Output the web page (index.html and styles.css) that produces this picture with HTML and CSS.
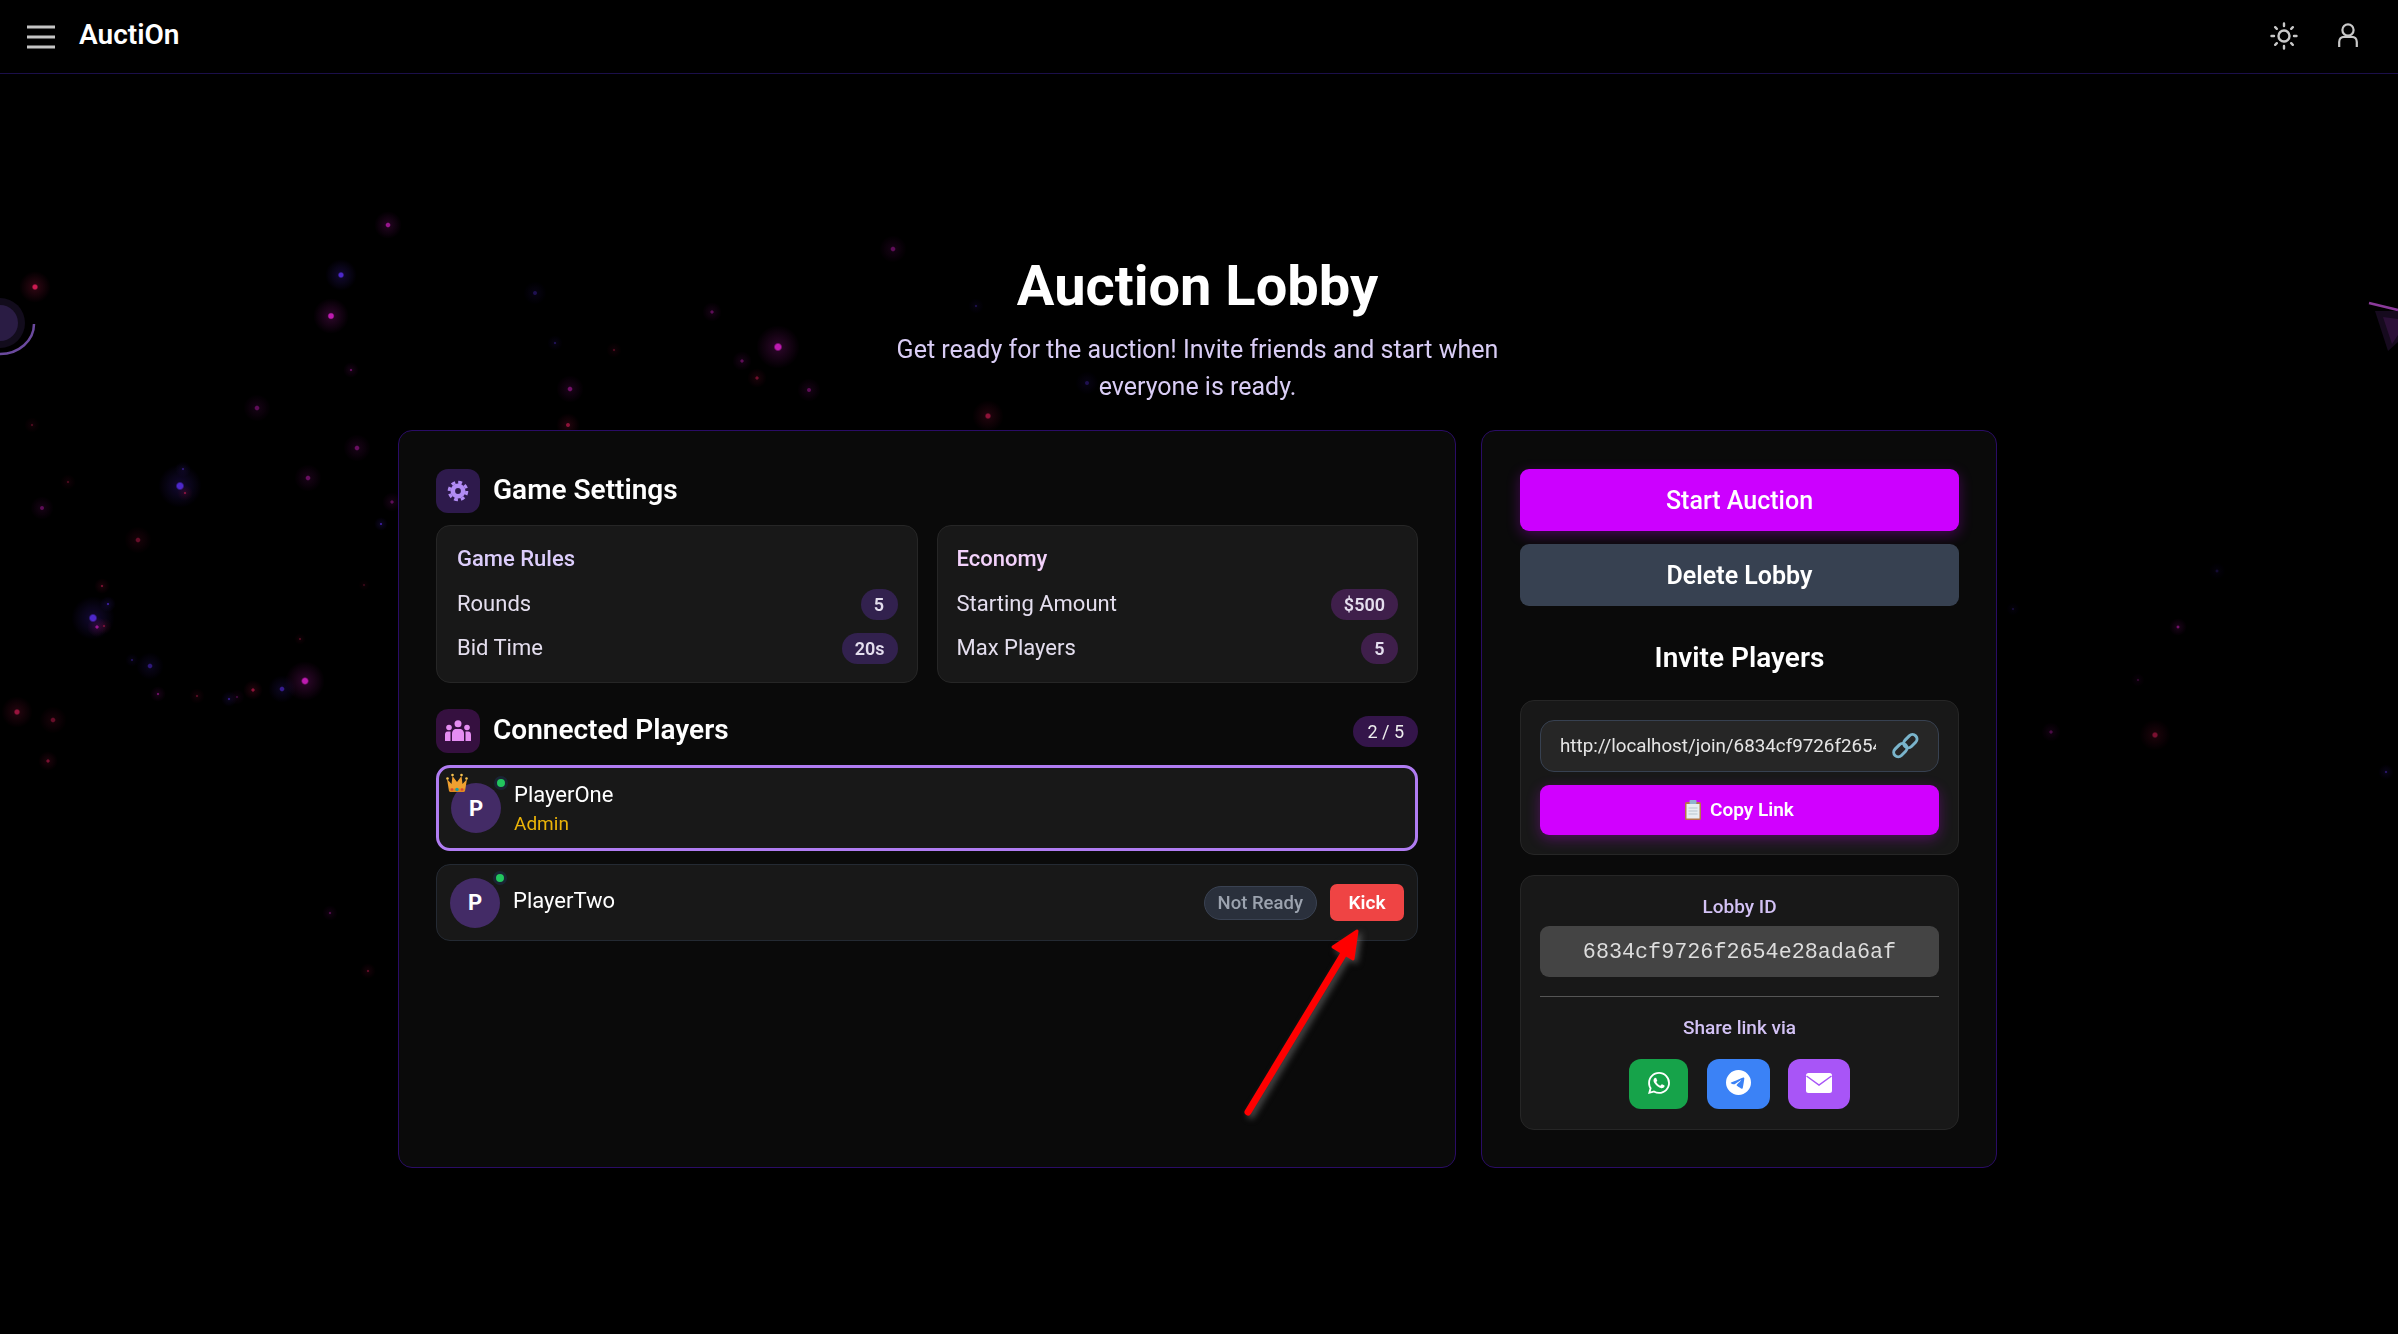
FILE: index.html
```html
<!DOCTYPE html>
<html lang="en">
<head>
    <meta charset="UTF-8">
    <meta name="viewport" content="width=device-width, initial-scale=1.0">
    <title>Auction Lobby - AuctiOn</title>
    <link rel="stylesheet" href="styles.css">
</head>
<body>
    <!-- background particles and floating shapes -->
    <svg class="particles" width="2398" height="1334" viewBox="0 0 2398 1334">
        <defs>
            <radialGradient id="pm"><stop offset="0" stop-color="#e020d0"/><stop offset=".12" stop-color="#e020d0"/><stop offset=".2" stop-color="#e020d0" stop-opacity=".2"/><stop offset="1" stop-color="#e020d0" stop-opacity="0"/></radialGradient>
            <radialGradient id="pb"><stop offset="0" stop-color="#5b30f0"/><stop offset=".12" stop-color="#5b30f0"/><stop offset=".2" stop-color="#5b30f0" stop-opacity=".2"/><stop offset="1" stop-color="#5b30f0" stop-opacity="0"/></radialGradient>
            <radialGradient id="pr"><stop offset="0" stop-color="#f02060"/><stop offset=".12" stop-color="#f02060"/><stop offset=".2" stop-color="#f02060" stop-opacity=".2"/><stop offset="1" stop-color="#f02060" stop-opacity="0"/></radialGradient>
        </defs>
        <g opacity=".85">
            <circle cx="35" cy="287" r="16" fill="url(#pr)"/>
            <circle cx="388" cy="225" r="14" fill="url(#pm)" opacity=".8"/>
            <circle cx="341" cy="275" r="16" fill="url(#pb)"/>
            <circle cx="331" cy="316" r="18" fill="url(#pm)"/>
            <circle cx="351" cy="370" r="8" fill="url(#pm)" opacity=".5"/>
            <circle cx="257" cy="408" r="14" fill="url(#pm)" opacity=".5"/>
            <circle cx="357" cy="448" r="14" fill="url(#pm)" opacity=".55"/>
            <circle cx="308" cy="478" r="14" fill="url(#pm)" opacity=".55"/>
            <circle cx="180" cy="486" r="22" fill="url(#pb)"/>
            <circle cx="183" cy="469" r="8" fill="url(#pb)" opacity=".5"/>
            <circle cx="185" cy="493" r="8" fill="url(#pr)" opacity=".6"/>
            <circle cx="32" cy="425" r="8" fill="url(#pr)" opacity=".35"/>
            <circle cx="68" cy="482" r="8" fill="url(#pr)" opacity=".35"/>
            <circle cx="42" cy="508" r="12" fill="url(#pm)" opacity=".5"/>
            <circle cx="392" cy="502" r="10" fill="url(#pm)" opacity=".5"/>
            <circle cx="381" cy="524" r="7" fill="url(#pb)" opacity=".7"/>
            <circle cx="138" cy="540" r="14" fill="url(#pr)" opacity=".5"/>
            <circle cx="102" cy="586" r="8" fill="url(#pr)" opacity=".55"/>
            <circle cx="108" cy="604" r="8" fill="url(#pb)" opacity=".7"/>
            <circle cx="93" cy="618" r="22" fill="url(#pb)"/>
            <circle cx="97" cy="627" r="10" fill="url(#pm)" opacity=".8"/>
            <circle cx="104" cy="626" r="8" fill="url(#pr)" opacity=".5"/>
            <circle cx="132" cy="660" r="7" fill="url(#pb)" opacity=".4"/>
            <circle cx="150" cy="666" r="14" fill="url(#pb)" opacity=".6"/>
            <circle cx="158" cy="694" r="8" fill="url(#pm)" opacity=".55"/>
            <circle cx="197" cy="696" r="8" fill="url(#pr)" opacity=".4"/>
            <circle cx="229" cy="699" r="8" fill="url(#pb)" opacity=".6"/>
            <circle cx="237" cy="697" r="8" fill="url(#pm)" opacity=".3"/>
            <circle cx="253" cy="690" r="10" fill="url(#pr)" opacity=".7"/>
            <circle cx="282" cy="689" r="14" fill="url(#pb)" opacity=".7"/>
            <circle cx="305" cy="681" r="20" fill="url(#pm)"/>
            <circle cx="300" cy="639" r="6" fill="url(#pr)" opacity=".35"/>
            <circle cx="364" cy="585" r="6" fill="url(#pr)" opacity=".25"/>
            <circle cx="17" cy="712" r="16" fill="url(#pr)" opacity=".75"/>
            <circle cx="53" cy="720" r="14" fill="url(#pr)" opacity=".5"/>
            <circle cx="48" cy="761" r="10" fill="url(#pr)" opacity=".6"/>
            <circle cx="330" cy="913" r="8" fill="url(#pm)" opacity=".4"/>
            <circle cx="368" cy="971" r="8" fill="url(#pr)" opacity=".45"/>
            <circle cx="893" cy="249" r="14" fill="url(#pm)" opacity=".5"/>
            <circle cx="535" cy="293" r="12" fill="url(#pb)" opacity=".4"/>
            <circle cx="712" cy="312" r="10" fill="url(#pm)" opacity=".5"/>
            <circle cx="555" cy="343" r="8" fill="url(#pb)" opacity=".4"/>
            <circle cx="614" cy="350" r="8" fill="url(#pr)" opacity=".35"/>
            <circle cx="778" cy="347" r="22" fill="url(#pm)"/>
            <circle cx="742" cy="361" r="10" fill="url(#pm)" opacity=".5"/>
            <circle cx="757" cy="378" r="10" fill="url(#pr)" opacity=".55"/>
            <circle cx="809" cy="390" r="12" fill="url(#pm)" opacity=".5"/>
            <circle cx="570" cy="389" r="14" fill="url(#pm)" opacity=".6"/>
            <circle cx="568" cy="425" r="12" fill="url(#pr)" opacity=".7"/>
            <circle cx="988" cy="416" r="16" fill="url(#pr)" opacity=".7"/>
            <circle cx="976" cy="306" r="8" fill="url(#pb)" opacity=".35"/>
            <circle cx="1087" cy="383" r="12" fill="url(#pb)" opacity=".4"/>
            <circle cx="2178" cy="627" r="9" fill="url(#pm)" opacity=".6"/>
            <circle cx="2155" cy="735" r="16" fill="url(#pr)" opacity=".6"/>
            <circle cx="2051" cy="732" r="10" fill="url(#pm)" opacity=".4"/>
            <circle cx="2138" cy="680" r="7" fill="url(#pm)" opacity=".25"/>
            <circle cx="2217" cy="571" r="9" fill="url(#pb)" opacity=".25"/>
            <circle cx="2013" cy="609" r="7" fill="url(#pb)" opacity=".25"/>
            <circle cx="2386" cy="772" r="8" fill="url(#pb)" opacity=".5"/>
        </g>
        <circle cx="0" cy="323" r="25" fill="#120c1c"/>
        <circle cx="0" cy="323" r="18" fill="#2a1c44"/>
        <path d="M34 324a34 30 0 0 1-34 30" fill="none" stroke="#6b4a9e" stroke-width="2.5"/>
        <path d="M2375 311L2388 351L2398 342V311Z" fill="#160a1e"/>
        <path d="M2383 317L2392 344L2398 335V319Z" fill="#2c1038"/>
        <path d="M2369 303L2398 310" stroke="#8a3a9a" stroke-width="2.5"/>
    </svg>

    <nav class="navbar">
        <div class="nav-left">
            <svg class="menu-icon" width="28" height="24" viewBox="0 0 28 24"><path d="M0 2H28M0 12H28M0 22H28" stroke="#c4c4c4" stroke-width="3"/></svg>
            <span class="logo">AuctiOn</span>
        </div>
        <div class="nav-right">
            <svg width="28" height="28" viewBox="0 0 28 28" fill="none" stroke="#c8c8c8" stroke-width="2.4"><circle cx="14" cy="14" r="5.5"/><path stroke-linecap="round" d="M14 1.5V4M14 24V26.5M1.5 14H4M24 14H26.5M5.2 5.2L6.8 6.8M21.2 21.2L22.8 22.8M5.2 22.8L6.8 21.2M21.2 6.8L22.8 5.2"/></svg>
            <svg width="20" height="25" viewBox="0 0 20 25" fill="none" stroke="#c8c8c8" stroke-width="2.2"><circle cx="10" cy="7" r="5.6"/><path d="M1.200 24V19C1.200 15.500 3.500 13.800 6 13.800H14C16.500 13.800 18.800 15.500 18.800 19V24"/></svg>
        </div>
    </nav>

    <main class="lobby">
        <header class="lobby-head">
            <h1>Auction Lobby</h1>
            <p>Get ready for the auction! Invite friends and start when everyone is ready.</p>
        </header>

        <div class="panels">
            <section class="panel">
                <div class="section-head">
                    <span class="section-icon icon-violet">
                        <svg width="24" height="24" viewBox="0 0 24 24" fill="none" stroke="#b28cf5"><circle cx="12" cy="12" r="5.200" stroke-width="4.600"/><circle cx="12" cy="12" r="8.800" stroke-width="3" stroke-dasharray="3.900 3"/></svg>
                    </span>
                    <h2>Game Settings</h2>
                </div>
                <div class="settings">
                    <div class="card">
                        <h3 class="rules-title">Game Rules</h3>
                        <div class="row"><span>Rounds</span><b class="pill pill-violet">5</b></div>
                        <div class="row"><span>Bid Time</span><b class="pill pill-violet">20s</b></div>
                    </div>
                    <div class="card">
                        <h3 class="economy-title">Economy</h3>
                        <div class="row"><span>Starting Amount</span><b class="pill pill-plum">$500</b></div>
                        <div class="row"><span>Max Players</span><b class="pill pill-plum">5</b></div>
                    </div>
                </div>

                <div class="section-head players-head">
                    <span class="section-icon icon-plum">
                        <svg width="26" height="22" viewBox="0 0 26 22" fill="#e58df2"><circle cx="13" cy="3.800" r="3.500"/><circle cx="4" cy="7.500" r="2.800"/><circle cx="22" cy="7.500" r="2.800"/><path d="M7 21V14C7 10.500 9 9 11 9H15C17 9 19 10.500 19 14V21Z"/><path d="M0 21V15C0 12 1.500 11.500 3 11.500H5.500V21ZM26 21V15C26 12 24.500 11.500 23 11.500H20.500V21Z"/></svg>
                    </span>
                    <h2>Connected Players</h2>
                    <span class="count">2 / 5</span>
                </div>

                <ul class="players">
                    <li class="player player-admin">
                        <div class="avatar">
                            P
                            <svg class="crown" width="22" height="20" viewBox="0 0 22 20"><path d="M1 6L5.500 11L6.500 3L11 9L15.500 3L16.500 11L21 6L19 18H3Z" fill="#f0a030"/><path d="M3 15.500H19L18.500 19H3.500Z" fill="#e08a20"/><circle cx="11" cy="16.500" r="1.700" fill="#1f9e9e"/><circle cx="6" cy="16.500" r="1.200" fill="#d8433a"/><circle cx="16" cy="16.500" r="1.200" fill="#d8433a"/><circle cx="1.500" cy="5.500" r="1.300" fill="#f6c350"/><circle cx="6.500" cy="2" r="1.300" fill="#f6c350"/><circle cx="15.500" cy="2" r="1.300" fill="#f6c350"/><circle cx="20.500" cy="5.500" r="1.300" fill="#f6c350"/></svg>
                            <span class="online"></span>
                        </div>
                        <div class="player-info">
                            <span class="player-name">PlayerOne</span>
                            <span class="player-role">Admin</span>
                        </div>
                    </li>
                    <li class="player">
                        <div class="avatar">
                            P
                            <span class="online"></span>
                        </div>
                        <div class="player-info player-info-up">
                            <span class="player-name">PlayerTwo</span>
                        </div>
                        <span class="not-ready">Not Ready</span>
                        <button class="kick">Kick</button>
                    </li>
                </ul>
            </section>

            <aside class="panel panel-side">
                <button class="btn btn-start">Start Auction</button>
                <button class="btn btn-delete">Delete Lobby</button>
                <h2 class="invite-title">Invite Players</h2>

                <div class="card invite-card">
                    <div class="link-field">
                        <input class="link-text" type="text" value="http://localhost/join/6834cf9726f2654e28ada6af" readonly>
                        <svg width="30" height="28" viewBox="0 0 30 28" fill="none" stroke="#7ab4cb" stroke-width="3"><rect x="-7" y="-4.500" width="15" height="9" rx="4.500" transform="translate(10 18.500) rotate(-45)"/><rect x="-7" y="-4.500" width="15" height="9" rx="4.500" transform="translate(20 9.500) rotate(-45)"/></svg>
                    </div>
                    <button class="btn-copy">
                        <svg width="16" height="20" viewBox="0 0 16 20"><rect x="0" y="2" width="16" height="18" rx="1.500" fill="#b5764a"/><rect x="1.500" y="4" width="13" height="14.500" fill="#e8eef2"/><path d="M3.500 8H12.500M3.500 11H12.500M3.500 14H12.500" stroke="#b8c6cf" stroke-width="1"/><rect x="4.500" y="0" width="7" height="4" rx="1" fill="#8fb4cf"/></svg>
                        Copy Link
                    </button>
                </div>

                <div class="card lobby-card">
                    <div class="lobby-label">Lobby ID</div>
                    <div class="lobby-id">6834cf9726f2654e28ada6af</div>
                    <hr class="divider">
                    <div class="share-label">Share link via</div>
                    <div class="share-buttons">
                        <a class="share share-whatsapp">
                            <svg width="22" height="22" viewBox="0 0 24 24" fill="#fff"><path d="M17.472 14.382c-.297-.149-1.758-.867-2.03-.967-.273-.099-.471-.148-.67.15-.197.297-.767.966-.94 1.164-.173.199-.347.223-.644.075-.297-.15-1.255-.463-2.39-1.475-.883-.788-1.48-1.761-1.653-2.059-.173-.297-.018-.458.13-.606.134-.133.298-.347.446-.52.149-.174.198-.298.298-.497.099-.198.05-.371-.025-.52-.075-.149-.669-1.612-.916-2.207-.242-.579-.487-.5-.669-.51-.173-.008-.371-.01-.57-.01-.198 0-.52.074-.792.372-.272.297-1.04 1.016-1.04 2.479 0 1.462 1.065 2.875 1.213 3.074.149.198 2.096 3.2 5.077 4.487.709.306 1.262.489 1.694.625.712.227 1.36.195 1.871.118.571-.085 1.758-.719 2.006-1.413.248-.694.248-1.289.173-1.413-.074-.124-.272-.198-.57-.347m-5.421 7.403h-.004a9.87 9.87 0 01-5.031-1.378l-.361-.214-3.741.982.998-3.648-.235-.374a9.86 9.86 0 01-1.51-5.26c.001-5.45 4.436-9.884 9.888-9.884 2.64 0 5.122 1.03 6.988 2.898a9.825 9.825 0 012.893 6.994c-.003 5.45-4.437 9.884-9.885 9.884m8.413-18.297A11.815 11.815 0 0012.05 0C5.495 0 .16 5.335.157 11.892c0 2.096.547 4.142 1.588 5.945L.057 24l6.305-1.654a11.882 11.882 0 005.683 1.448h.005c6.554 0 11.89-5.335 11.893-11.893a11.821 11.821 0 00-3.48-8.413z"/></svg>
                        </a>
                        <a class="share share-telegram">
                            <svg width="25" height="25" viewBox="0 0 24 24" fill="#fff"><path d="M11.944 0A12 12 0 0 0 0 12a12 12 0 0 0 12 12 12 12 0 0 0 12-12A12 12 0 0 0 12 0a12 12 0 0 0-.056 0zm4.962 7.224c.1-.002.321.023.465.14a.506.506 0 0 1 .171.325c.016.093.036.306.02.472-.18 1.898-.962 6.502-1.36 8.627-.168.9-.499 1.201-.82 1.23-.696.065-1.225-.46-1.9-.902-1.056-.693-1.653-1.124-2.678-1.8-1.185-.78-.417-1.21.258-1.91.177-.184 3.247-2.977 3.307-3.23.007-.032.014-.15-.056-.212s-.174-.041-.249-.024c-.106.024-1.793 1.14-5.061 3.345-.48.33-.913.49-1.302.48-.428-.008-1.252-.241-1.865-.44-.752-.245-1.349-.374-1.297-.789.027-.216.325-.437.893-.663 3.498-1.524 5.83-2.529 6.998-3.014 3.332-1.386 4.025-1.627 4.476-1.635z"/></svg>
                        </a>
                        <a class="share share-mail">
                            <svg width="26" height="20" viewBox="0 0 26 20"><rect width="26" height="20" rx="2.500" fill="#fff"/><path d="M0.500 3L13 12L25.500 3" fill="none" stroke="#a855f7" stroke-width="1.500"/></svg>
                        </a>
                    </div>
                </div>
            </aside>
        </div>
    </main>

    <!-- annotation arrow pointing at the kick button -->
    <svg class="arrow" width="2398" height="1334" viewBox="0 0 2398 1334">
        <path d="M1248 1112L1349 945" stroke="#ff0000" stroke-width="7" stroke-linecap="round"/>
        <path d="M1357 931L1333 947L1353 959Z" fill="#ff0000" stroke="#ff0000" stroke-width="3" stroke-linejoin="round"/>
    </svg>
</body>
</html>
```

FILE: styles.css
```css
* {
    box-sizing: border-box;
}

body {
    margin: 0;
    min-height: 100vh;
    background-color: #000;
    color: #fff;
    font-family: Roboto, "Liberation Sans", sans-serif;
    overflow: hidden;
}

.particles,
.arrow {
    position: absolute;
    top: 0;
    left: 0;
}

.arrow {
    filter: drop-shadow(3px 3px 3px rgba(130, 130, 130, 0.55));
    pointer-events: none;
}

.navbar {
    position: relative;
    height: 74px;
    display: flex;
    justify-content: space-between;
    align-items: center;
    padding: 0 40px 0 27px;
    background: #000;
    border-bottom: 1px solid #1b0f4a;
}

.nav-left {
    display: flex;
    align-items: center;
    gap: 24px;
}

.logo {
    font-size: 28px;
    font-weight: 600;
    margin-top: -4px;
}

.nav-right {
    display: flex;
    align-items: center;
    gap: 40px;
    margin-top: -2px;
}

.lobby {
    position: relative;
    width: 1599px;
    margin-left: 398px;
    padding-top: 179px;
}

.lobby-head {
    text-align: center;
    margin-bottom: 25px;
}

.lobby-head h1 {
    margin: 0 0 12px;
    font-size: 56px;
    line-height: 66px;
    font-weight: 700;
}

.lobby-head p {
    margin: 0 auto;
    max-width: 680px;
    font-size: 25px;
    line-height: 37px;
    color: #d9cdf5;
}

.panels {
    display: grid;
    grid-template-columns: 1058px 516px;
    gap: 25px;
}

.panel {
    background: #0a0a0a;
    border: 1px solid #2a0c66;
    border-radius: 14px;
    padding: 38px 37px 37px;
}

.panel-side {
    padding: 38px 37px 37px 38px;
    display: flex;
    flex-direction: column;
}

.section-head {
    display: flex;
    align-items: center;
    gap: 13px;
    margin-bottom: 12px;
}

.section-head h2 {
    margin-top: -3px;
}

.players-head {
    margin: 26px 0 12px;
}

.section-icon {
    width: 44px;
    height: 44px;
    border-radius: 12px;
    display: flex;
    align-items: center;
    justify-content: center;
}

.icon-violet {
    background: #2e1a4c;
}

.icon-plum {
    background: #35103f;
}

h2 {
    margin: 0;
    font-size: 28px;
    font-weight: 600;
}

.count {
    margin-left: auto;
    padding: 0 14px;
    height: 31px;
    line-height: 31px;
    border-radius: 16px;
    background: #34154a;
    font-size: 18px;
    color: #eee;
}

.settings {
    display: grid;
    grid-template-columns: 1fr 1fr;
    gap: 19px;
}

.card {
    background: #181818;
    border: 1px solid #262626;
    border-radius: 14px;
}

.settings .card {
    padding: 18px 19px 18px 20px;
}

.settings .card:last-child {
    padding-left: 19px;
}

.card h3 {
    margin: 0 0 15px;
    font-size: 22px;
    line-height: 30px;
    font-weight: 500;
}

.rules-title {
    color: #dccdfb;
}

.economy-title {
    color: #f3d2fb;
}

.row {
    display: flex;
    justify-content: space-between;
    align-items: center;
    font-size: 22px;
    color: #e4deee;
    height: 31px;
    margin-bottom: 13px;
}

.row:last-child {
    margin-bottom: 0;
}

.row span {
    margin-top: -3px;
}

.pill {
    height: 31px;
    line-height: 31px;
    min-width: 37px;
    padding: 0 13px;
    border-radius: 16px;
    font-size: 18px;
    font-weight: 600;
    text-align: center;
}

.pill-violet {
    background: #32214e;
}

.pill-plum {
    background: #3f1f4b;
}

.players {
    list-style: none;
    margin: 0;
    padding: 0;
    display: flex;
    flex-direction: column;
    gap: 13px;
}

.player {
    display: flex;
    align-items: center;
    gap: 13px;
    height: 77px;
    padding: 0 13px;
    background: #181818;
    border: 1px solid #242a33;
    border-radius: 14px;
}

.player-admin {
    height: 86px;
    padding: 0 12px;
    border: 3px solid #b07cf2;
}

.avatar {
    position: relative;
    width: 50px;
    height: 50px;
    border-radius: 50%;
    background: #432b66;
    display: flex;
    align-items: center;
    justify-content: center;
    font-size: 22px;
    font-weight: 700;
}

.crown {
    position: absolute;
    top: -10px;
    left: -5px;
}

.online {
    position: absolute;
    top: -7px;
    right: -7px;
    width: 14px;
    height: 14px;
    border-radius: 50%;
    background: #22c55e;
    border: 3px solid #1a2433;
}

.player-info {
    flex: 1;
    display: flex;
    flex-direction: column;
    gap: 6px;
}

.player-info-up {
    margin-top: -5px;
}

.player-name {
    font-size: 22px;
    line-height: 25px;
}

.player-role {
    font-size: 19px;
    line-height: 22px;
    color: #eab308;
}

.not-ready {
    height: 34px;
    line-height: 32px;
    padding: 0 13px;
    border-radius: 17px;
    background: #2a303c;
    border: 1px solid #3a4252;
    color: #9ca3af;
    font-size: 18.500px;
    font-weight: 500;
}

.kick {
    width: 74px;
    height: 37px;
    border: none;
    border-radius: 7px;
    background: #ef4444;
    color: #fff;
    font-family: inherit;
    font-size: 19px;
    font-weight: 600;
}

.btn {
    width: 100%;
    height: 62px;
    border: none;
    border-radius: 9px;
    color: #fff;
    font-family: inherit;
    font-size: 25px;
}

.btn-start {
    background: #cc00ff;
    font-weight: 500;
    box-shadow: 0 4px 14px rgba(204, 0, 255, 0.3);
    margin-bottom: 13px;
}

.btn-delete {
    background: #374151;
    font-weight: 600;
}

.invite-title {
    margin: 35px 0 25px;
    text-align: center;
    line-height: 34px;
}

.invite-card {
    padding: 19px;
    margin-bottom: 20px;
}

.link-field {
    height: 52px;
    display: flex;
    align-items: center;
    justify-content: space-between;
    padding: 0 18px 0 19px;
    background: #262626;
    border: 1px solid #374151;
    border-radius: 14px;
    margin-bottom: 13px;
}

.link-text {
    width: 316px;
    padding: 0;
    border: none;
    outline: none;
    background: transparent;
    font-family: inherit;
    font-size: 18.800px;
    color: #e5e5e5;
}

.btn-copy {
    width: 100%;
    height: 50px;
    padding-bottom: 2px;
    border: none;
    border-radius: 9px;
    background: #d100ff;
    box-shadow: 0 4px 14px rgba(209, 0, 255, 0.3);
    color: #fff;
    font-family: inherit;
    font-size: 19px;
    font-weight: 600;
    display: flex;
    align-items: center;
    justify-content: center;
    gap: 9px;
}

.lobby-card {
    padding: 19px;
    text-align: center;
}

.lobby-label,
.share-label {
    height: 24px;
    line-height: 24px;
    font-size: 19px;
    font-weight: 500;
    color: #d3c2f5;
}

.lobby-id {
    height: 51px;
    line-height: 54px;
    margin-top: 7px;
    background: #444;
    border-radius: 9px;
    font-family: "Liberation Mono", monospace;
    font-size: 21.760px;
    color: #ddd;
}

.divider {
    margin: 19px 0;
    border: none;
    border-top: 1px solid #555;
}

.share-buttons {
    display: flex;
    justify-content: center;
    gap: 18.500px;
    margin-top: 19px;
    padding-bottom: 1px;
}

.share {
    height: 50px;
    padding-bottom: 3px;
    border-radius: 12px;
    display: flex;
    align-items: center;
    justify-content: center;
}

.share-whatsapp {
    width: 59px;
    background: #16a34a;
}

.share-telegram {
    width: 63px;
    background: #3b82f6;
}

.share-mail {
    width: 62px;
    background: #a855f7;
}
```
